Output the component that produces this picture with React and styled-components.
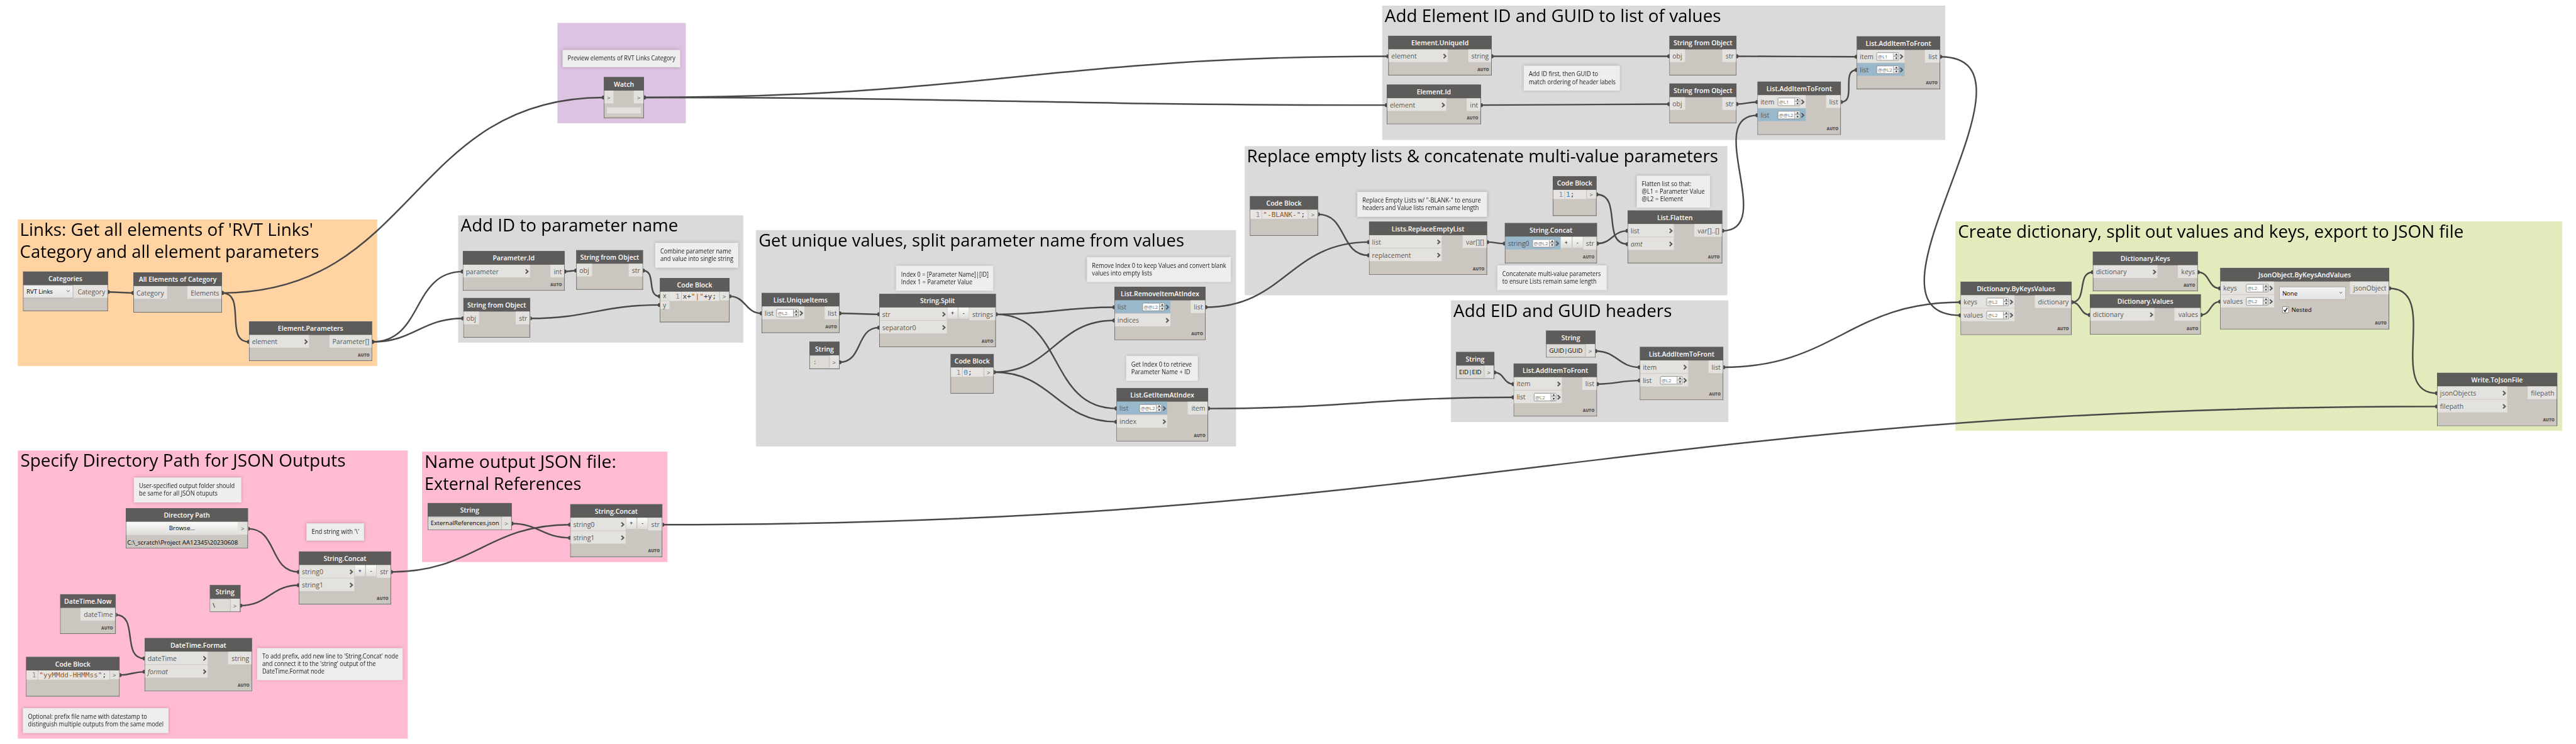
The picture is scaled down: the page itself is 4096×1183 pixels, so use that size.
import React, { useLayoutEffect, useRef, useState } from 'react';
import styled, { createGlobalStyle, css } from 'styled-components';

const SCALE = 4096 / 5060;

const GlobalStyle = createGlobalStyle`
  * { box-sizing: border-box; }
  body { margin: 0; background: #fff; overflow: hidden; }
`;

const Viewport = styled.main`
  width: 100vw;
  height: 100vh;
  overflow: hidden;
  background: #fff;
`;

const Canvas = styled.div`
  position: relative;
  width: 5060px;
  height: 1462px;
  transform: scale(${SCALE});
  transform-origin: 0 0;
  font-family: 'Open Sans', 'Noto Sans', sans-serif;
`;

const Placed = css`
  position: absolute;
  left: ${(p) => p.$x}px;
  top: ${(p) => p.$y}px;
  width: ${(p) => p.$w}px;
  height: ${(p) => p.$h}px;
`;

const Group = styled.section`
  ${Placed}
  padding: 0 0 0 ${(p) => p.$pad}px;
  background: ${(p) => p.$color};
`;

const GroupTitle = styled.h2`
  margin: -2.2px 0 0;
  font-size: 33px;
  line-height: 43.3px;
  font-weight: 400;
  color: #000;
`;

const NoteBox = styled.aside`
  ${Placed}
  display: flex;
  flex-direction: column;
  justify-content: center;
  padding: 0 0 0 10px;
  background: #eee;
  box-shadow: 0 0 6px rgba(60, 40, 60, 0.32);
  font-size: 12.3px;
  line-height: 14.3px;
  color: #1c1c1c;
`;

const Wires = styled.svg`
  position: absolute;
  inset: 0;
  pointer-events: none;
`;

const NodeBox = styled.article`
  ${Placed}
  display: flex;
  flex-direction: column;
  background: #cbc6bf;
  border: 1px solid #5e5c5a;
  border-top: 0;
  color: #595755;
  font-size: 13px;
`;

const NodeHeader = styled.header`
  flex: none;
  height: 27px;
  margin: 0 -1px;
  line-height: 28px;
  text-align: center;
  background: #5e5c5a;
  color: #fff;
  font-weight: 600;
  white-space: nowrap;
`;

const NodeBody = styled.div`
  display: flex;
  align-items: flex-start;
`;

const NodeFooter = styled.footer`
  margin-top: auto;
  padding: 0 4px 6px 0;
  text-align: right;
  font-size: 8px;
  line-height: 11px;
  font-weight: 800;
  color: #595755;
`;

const Inputs = styled.div`
  display: flex;
  flex-direction: column;
  gap: 1px;
  width: ${(p) => p.$w}px;
`;

const Port = styled.div`
  display: flex;
  align-items: center;
  height: ${(p) => p.$h || 25}px;
  padding: ${(p) => (p.$h ? '0 5px' : '1px 2px 0 5px')};
  background: ${(p) => (p.$blue ? '#99b8cb' : '#e4e2de')};
  font-style: ${(p) => (p.$italic ? 'italic' : 'normal')};
  white-space: nowrap;
`;

const PortLabel = styled.span`
  flex: 1;
`;

const Output = styled.div`
  display: flex;
  align-items: center;
  justify-content: flex-end;
  flex: none;
  width: ${(p) => p.$w}px;
  height: ${(p) => p.$h || 25}px;
  margin-left: ${(p) => (p.$left ? '0' : 'auto')};
  padding: 1px ${(p) => (p.$arrow ? 6 : 4.5)}px 0 0;
  background: #e4e2de;
  font-size: ${(p) => (p.$arrow ? 12 : 13)}px;
  border-left: ${(p) => (p.$line ? '1px solid #b9b7b4' : '0')};
`;

const SpinnerBox = styled.span`
  display: flex;
  width: 44px;
  height: 16px;
  margin: -1px 1px 0 0;
  background: #fff;
  border: 1px solid #7d7d7d;
  border-radius: 2px;
  font-size: 9.8px;
  line-height: 15px;
  color: #6d6d6d;
  overflow: hidden;
`;

const SpinnerText = styled.span`
  width: 32px;
  padding-left: 1.5px;
`;

const SpinnerButtons = styled.span`
  flex: 1;
  display: flex;
  flex-direction: column;
  border-left: 1px solid #7d7d7d;
`;

const SpinnerButton = styled.span`
  flex: 1;
  display: grid;
  place-items: center;
  background: linear-gradient(#fbfbfb, #c9c9c9);
  & + & { border-top: 1px solid #7d7d7d; }
  &::after {
    content: '';
    border: 2px solid transparent;
    border-top-width: 0;
    border-bottom: 3px solid #111;
    transform: ${(p) => (p.$down ? 'rotate(180deg)' : 'none')};
  }
`;

const ArityButtons = styled.div`
  flex: 1;
  display: flex;
  gap: 2px;
  padding: 0 1px;
`;

const ArityButton = styled.button`
  flex: 1;
  height: 22px;
  padding: 0 0 1px;
  border: 0;
  background: linear-gradient(#fbfbfa, #dedcd8);
  font: 12px 'Open Sans', sans-serif;
  color: #000;
`;

const Combo = styled.div`
  display: flex;
  align-items: center;
  justify-content: space-between;
  width: ${(p) => p.$w}px;
  height: 25.5px;
  padding: 0 5px 1px;
  background: linear-gradient(#f2f2f2, #e4e4e4);
  border: 1px solid #acacac;
  font-size: 12px;
  letter-spacing: -0.15px;
  color: #000;
`;

const Settings = styled.div`
  display: flex;
  flex-direction: column;
  gap: 12px;
  padding: 10px 0 0 10px;
`;

const CheckRow = styled.label`
  display: flex;
  align-items: center;
  gap: 5px;
  padding-left: 6px;
  font-size: 12px;
  line-height: 16px;
  color: #000;
`;

const CheckBox = styled.span`
  display: grid;
  place-items: center;
  width: 13px;
  height: 13px;
  background: #fff;
  border: 1px solid #707070;
`;

const TextField = styled.div`
  flex: 1;
  height: 25px;
  padding: 0 0 0 5px;
  background: #dedbd7;
  border-top: 1px solid #abadb3;
  border-right: 1px solid #abadb3;
  font-size: 12px;
  line-height: 24px;
  color: #000;
  white-space: pre;
`;

const Browse = styled.button`
  flex: 1;
  height: 26px;
  padding: 0 0 4px;
  border: 0;
  background: linear-gradient(#fbfbfa, #dedcd8);
  font: 12px 'Open Sans', sans-serif;
  color: #000;
`;

const PathText = styled.div`
  padding: 6px 0 0 2px;
  font-size: 12px;
  line-height: 17px;
  color: #000;
`;

const CodeLine = styled.code`
  display: flex;
  flex: 1;
  height: 18px;
  background: #e8e4e1;
  font: 13.7px/18.6px 'DejaVu Sans Mono', monospace;
  color: #333;
  white-space: pre;
`;

const LineNumber = styled.span`
  flex: none;
  width: ${(p) => (p.$wide ? 24 : 23)}px;
  margin-right: 2px;
  padding-right: 3px;
  text-align: right;
  color: #8e8e8e;
  border-right: 1px dotted #999;
`;

const Token = styled.span`
  color: ${(p) => ({ s: '#8f5a35', n: '#2f84d8', p: '#333' })[p.$t]};
`;

const WatchBox = styled.div`
  height: 12px;
  margin: 8px 5px 2px;
  background: #e2e0dc;
`;

const WatchStrip = styled.div`
  height: 2px;
  margin: 0 4px;
  background: #d2d2d2;
`;

const Line = styled.span`
  display: block;
  width: max-content;
  white-space: pre;
  transform-origin: 0 50%;
`;

/* One line of text, condensed or stretched to a given width. */
function FitLine({ width, children }) {
  const ref = useRef(null);
  const [ratio, setRatio] = useState(1);
  useLayoutEffect(() => {
    setRatio(width / ref.current.offsetWidth);
  }, [width, children]);
  return (
    <Line ref={ref} style={{ transform: `scaleX(${ratio})` }}>
      {children}
    </Line>
  );
}

const Chevron = () => (
  <svg width="8" height="11" viewBox="0 0 8 11">
    <path d="M1.6 1.2 L6 5.3 L1.6 9.4" fill="none" stroke="#595755" strokeWidth="2.5" />
  </svg>
);

const Caret = () => (
  <svg width="8" height="6" viewBox="0 0 8 6">
    <path d="M1.2 1 L4 4.4 L6.8 1" fill="none" stroke="#606060" strokeWidth="1.2" />
  </svg>
);

const Spinner = ({ value }) => (
  <SpinnerBox>
    <SpinnerText>{value}</SpinnerText>
    <SpinnerButtons>
      <SpinnerButton />
      <SpinnerButton $down />
    </SpinnerButtons>
  </SpinnerBox>
);

const GREY = '#dadada';
const PINK = '#ffbbd3';

const groups = [
  { x: 35, y: 431, w: 706, h: 288, c: '#ffd3a2', pad: 4, lines: [["Links: Get all elements of 'RVT Links'", 576], ['Category and all element parameters', 588]] },
  { x: 1095, y: 45, w: 252, h: 197, c: '#dcc3e1', pad: 4, lines: [] },
  { x: 2715, y: 11, w: 1106, h: 264, c: GREY, pad: 5, lines: [['Add Element ID and GUID to list of values', 661]] },
  { x: 2445, y: 287, w: 948, h: 293, c: GREY, pad: 4, lines: [['Replace empty lists & concatenate multi-value parameters', 926]] },
  { x: 1485, y: 452, w: 943, h: 425, c: GREY, pad: 5, lines: [['Get unique values, split parameter name from values', 836]] },
  { x: 900, y: 423, w: 560, h: 250, c: GREY, pad: 5, lines: [['Add ID to parameter name', 427]] },
  { x: 2850, y: 590, w: 545, h: 239, c: GREY, pad: 5, lines: [['Add EID and GUID headers', 429]] },
  { x: 3841, y: 435, w: 1192, h: 411, c: '#e1ebbb', pad: 5, lines: [['Create dictionary, split out values and keys, export to JSON file', 993]] },
  { x: 35, y: 885, w: 766, h: 566, c: PINK, pad: 5, lines: [['Specify Directory Path for JSON Outputs', 639]] },
  { x: 829, y: 887, w: 482, h: 217, c: PINK, pad: 5, lines: [['Name output JSON file:', 376], ['External References', 308]] },
];

const notes = [
  { x: 1105, y: 98, w: 231, h: 34, lines: [['Preview elements of RVT Links Category', 212]] },
  { x: 2993, y: 129, w: 189, h: 49, lines: [['Add ID first, then GUID to', 136], ['match ordering of header labels', 171]] },
  { x: 2666, y: 377, w: 255, h: 49, lines: [['Replace Empty Lists w/ "-BLANK-" to ensure', 233], ['headers and Value lists remain same length', 229]] },
  { x: 3215, y: 345, w: 144, h: 63, lines: [['Flatten list so that:', 97], ['@L1 = Parameter Value', 124], ['@L2 = Element', 81]] },
  { x: 2941, y: 521, w: 215, h: 49, lines: [['Concatenate multi-value parameters', 193], ['to ensure Lists remain same length', 185]] },
  { x: 1760, y: 522, w: 191, h: 49, lines: [['Index 0 = [Parameter Name]|[ID]', 172], ['Index 1 = Parameter Value', 140]] },
  { x: 2135, y: 505, w: 283, h: 49, lines: [['Remove Index 0 to keep Values and convert blank', 264], ['values into empty lists', 118]] },
  { x: 2212, y: 699, w: 141, h: 49, lines: [['Get Index 0 to retrieve', 119], ['Parameter Name + ID', 116]] },
  { x: 1287, y: 477, w: 163, h: 49, lines: [['Combine parameter name', 139], ['and value into single string', 143]] },
  { x: 263, y: 938, w: 211, h: 49, lines: [['User-specified output folder should', 188], ['be same for all JSON otuputs', 154]] },
  { x: 602, y: 1028, w: 113, h: 34, lines: [["End string with '\\'", 94]] },
  { x: 505, y: 1273, w: 286, h: 63, lines: [["To add prefix, add new line to 'String.Concat' node", 267], ["and connect it to the 'string' output of the", 223], ['DateTime.Format node', 122]] },
  { x: 45, y: 1391, w: 286, h: 49, lines: [['Optional: prefix file name with datestamp to', 234], ['distinguish multiple outputs from the same model', 266]] },
];

const nodes = {
  categories: { x: 45, y: 533, w: 167, h: 78, title: 'Categories', kind: 'combo', out: ['Category', 67] },
  allElements: { x: 262, y: 535, w: 174, h: 79, title: 'All Elements of Category', inW: 65, ins: [{ l: 'Category', plain: true }], out: ['Elements', 67] },
  elementParams: { x: 489, y: 631, w: 242, h: 78, title: 'Element.Parameters', inW: 117, ins: [{ l: 'element' }], out: ['Parameter[]', 83], auto: true },
  watch: { x: 1186, y: 151, w: 79, h: 81, title: 'Watch', kind: 'watch' },
  uniqueId: { x: 2727, y: 70, w: 203, h: 78, title: 'Element.UniqueId', inW: 116, ins: [{ l: 'element' }], out: ['string', 45], auto: true },
  elementId: { x: 2724, y: 166, w: 185, h: 78, title: 'Element.Id', inW: 116, ins: [{ l: 'element' }], out: ['int', 27], auto: true },
  sfoTop: { x: 3279, y: 70, w: 132, h: 78, title: 'String from Object', inW: 30, ins: [{ l: 'obj', plain: true }], out: ['str', 27] },
  sfoLow: { x: 3279, y: 164, w: 132, h: 78, title: 'String from Object', inW: 30, ins: [{ l: 'obj', plain: true }], out: ['str', 27] },
  frontA: { x: 3647, y: 71, w: 164, h: 104, title: 'List.AddItemToFront', inW: 93, ins: [{ l: 'item', lv: '@L1' }, { l: 'list', lv: '@@L2', blue: true }], out: ['list', 29], auto: true },
  frontB: { x: 3452, y: 160, w: 164, h: 105, title: 'List.AddItemToFront', inW: 94, ins: [{ l: 'item', lv: '@L1' }, { l: 'list', lv: '@@L2', blue: true }], out: ['list', 28], auto: true },
  blank: { x: 2455, y: 385, w: 134, h: 78, title: 'Code Block', kind: 'code', code: [['s', '"-BLANK-"'], ['p', ';']] },
  replaceEmpty: { x: 2689, y: 435, w: 232, h: 105, title: 'Lists.ReplaceEmptyList', inW: 142, ins: [{ l: 'list' }, { l: 'replacement' }], out: ['var[][]', 47], auto: true },
  concatList: { x: 2956, y: 438, w: 181, h: 79, title: 'String.Concat', inW: 108, ins: [{ l: 'string0', lv: '@@L2', blue: true }], arity: true, out: ['str', 26], auto: true },
  one: { x: 3050, y: 346, w: 86, h: 78, title: 'Code Block', kind: 'code', code: [['n', '1'], ['p', ';']] },
  flatten: { x: 3197, y: 413, w: 186, h: 104, title: 'List.Flatten', inW: 90, ins: [{ l: 'list' }, { l: 'amt', it: true }], out: ['var[]..[]', 54], auto: true },
  uniqueItems: { x: 1496, y: 575, w: 153, h: 79, title: 'List.UniqueItems', inW: 83, ins: [{ l: 'list', lv: '@L2' }], out: ['list', 28], auto: true },
  split: { x: 1727, y: 577, w: 229, h: 105, title: 'String.Split', inW: 132, ins: [{ l: 'str' }, { l: 'separator0' }], arity: true, out: ['strings', 51], auto: true },
  colon: { x: 1590, y: 671, w: 59, h: 54, title: 'String', kind: 'string', text: ' :' },
  zero: { x: 1867, y: 695, w: 85, h: 78, title: 'Code Block', kind: 'code', code: [['n', '0'], ['p', ';']] },
  removeItem: { x: 2189, y: 563, w: 179, h: 105, title: 'List.RemoveItemAtIndex', inW: 109, ins: [{ l: 'list', lv: '@@L2', blue: true }, { l: 'indices' }], out: ['list', 28], auto: true },
  getItem: { x: 2193, y: 762, w: 180, h: 105, title: 'List.GetItemAtIndex', inW: 99, ins: [{ l: 'list', lv: '@@L2', blue: true }, { l: 'index' }], out: ['item', 39], auto: true },
  paramId: { x: 909, y: 493, w: 200, h: 78, title: 'Parameter.Id', inW: 131, ins: [{ l: 'parameter' }], out: ['int', 27], auto: true },
  sfoName: { x: 1132, y: 491, w: 131, h: 78, title: 'String from Object', inW: 30, ins: [{ l: 'obj', plain: true }], out: ['str', 27] },
  sfoParam: { x: 910, y: 585, w: 131, h: 78, title: 'String from Object', inW: 30, ins: [{ l: 'obj', plain: true }], out: ['str', 27] },
  join: { x: 1296, y: 546, w: 137, h: 87, title: 'Code Block', kind: 'code', vars: ['x', 'y'], code: [['p', 'x+'], ['s', '"|"'], ['p', '+y;']] },
  eid: { x: 2860, y: 691, w: 75, h: 53, title: 'String', kind: 'string', text: 'EID|EID' },
  guid: { x: 3037, y: 649, w: 97, h: 53, title: 'String', kind: 'string', text: 'GUID|GUID' },
  headEid: { x: 2973, y: 714, w: 164, h: 104, title: 'List.AddItemToFront', inW: 94, ins: [{ l: 'item' }, { l: 'list', lv: '@L2' }], out: ['list', 28], auto: true },
  headGuid: { x: 3221, y: 681, w: 164, h: 105, title: 'List.AddItemToFront', inW: 94, ins: [{ l: 'item' }, { l: 'list', lv: '@L2' }], out: ['list', 28], auto: true },
  byKeys: { x: 3851, y: 553, w: 218, h: 105, title: 'Dictionary.ByKeysValues', inW: 105, ins: [{ l: 'keys', lv: '@L2' }, { l: 'values', lv: '@L2' }], out: ['dictionary', 71], auto: true },
  dictKeys: { x: 4111, y: 494, w: 206, h: 78, title: 'Dictionary.Keys', inW: 126, ins: [{ l: 'dictionary' }], out: ['keys', 38], auto: true },
  dictValues: { x: 4105, y: 578, w: 218, h: 79, title: 'Dictionary.Values', inW: 126, ins: [{ l: 'dictionary' }], out: ['values', 51], auto: true },
  json: { x: 4361, y: 526, w: 332, h: 121, title: 'JsonObject.ByKeysAndValues', inW: 105, ins: [{ l: 'keys', lv: '@L2' }, { l: 'values', lv: '@L2' }], settings: true, out: ['jsonObject', 76], auto: true },
  write: { x: 4787, y: 732, w: 236, h: 105, title: 'Write.ToJsonFile', inW: 137, ins: [{ l: 'jsonObjects' }, { l: 'filepath' }], out: ['filepath', 57], auto: true },
  dirPath: { x: 247, y: 998, w: 240, h: 79, title: 'Directory Path', kind: 'path', text: 'C:\\_scratch\\Project AA12345\\20230608' },
  concatDir: { x: 587, y: 1083, w: 181, h: 104, title: 'String.Concat', inW: 108, ins: [{ l: 'string0' }, { l: 'string1' }], arity: true, out: ['str', 27], auto: true },
  slash: { x: 412, y: 1149, w: 60, h: 53, title: 'String', kind: 'string', text: '\\' },
  now: { x: 118, y: 1167, w: 109, h: 78, title: 'DateTime.Now', inW: 0, ins: [], out: ['dateTime', 68], auto: true },
  stamp: { x: 51, y: 1290, w: 184, h: 78, title: 'Code Block', kind: 'code', code: [['s', '"yyMMdd-HHMMss"'], ['p', ';']] },
  format: { x: 284, y: 1253, w: 211, h: 105, title: 'DateTime.Format', inW: 123, ins: [{ l: 'dateTime' }, { l: 'format', it: true }], out: ['string', 46], auto: true },
  fileName: { x: 840, y: 988, w: 165, h: 53, title: 'String', kind: 'string', text: 'ExternalReferences.json', fit: 135 },
  concatName: { x: 1120, y: 990, w: 181, h: 104, title: 'String.Concat', inW: 108, ins: [{ l: 'string0' }, { l: 'string1' }], arity: true, out: ['str', 27], auto: true },
};

const wires = [
  ['categories', 'allElements', 0], ['allElements', 'watch', 0], ['allElements', 'elementParams', 0],
  ['watch', 'uniqueId', 0], ['watch', 'elementId', 0],
  ['elementParams', 'paramId', 0], ['elementParams', 'sfoParam', 0],
  ['paramId', 'sfoName', 0], ['sfoName', 'join', 0], ['sfoParam', 'join', 1], ['join', 'uniqueItems', 0],
  ['uniqueItems', 'split', 0], ['colon', 'split', 1],
  ['split', 'removeItem', 0], ['split', 'getItem', 0], ['zero', 'removeItem', 1], ['zero', 'getItem', 1],
  ['removeItem', 'replaceEmpty', 0], ['blank', 'replaceEmpty', 1], ['replaceEmpty', 'concatList', 0],
  ['concatList', 'flatten', 0], ['one', 'flatten', 1], ['flatten', 'frontB', 1],
  ['uniqueId', 'sfoTop', 0], ['elementId', 'sfoLow', 0], ['sfoTop', 'frontA', 0], ['sfoLow', 'frontB', 0],
  ['frontB', 'frontA', 1], ['frontA', 'byKeys', 1],
  ['getItem', 'headEid', 1], ['eid', 'headEid', 0], ['guid', 'headGuid', 0], ['headEid', 'headGuid', 1],
  ['headGuid', 'byKeys', 0], ['byKeys', 'dictKeys', 0], ['byKeys', 'dictValues', 0],
  ['dictKeys', 'json', 0], ['dictValues', 'json', 1], ['json', 'write', 0],
  ['dirPath', 'concatDir', 0], ['slash', 'concatDir', 1], ['now', 'format', 0], ['stamp', 'format', 1],
  ['concatDir', 'concatName', 0], ['fileName', 'concatName', 1], ['concatName', 'write', 1],
];

const outPoint = (n) => [n.x + n.w, n.y + (n.kind === 'code' ? 36 : 40.5)];
const inPoint = (n, i) => [n.x, n.y + (n.kind === 'code' ? 36 + 17 * i : 40.5 + 26 * i)];

function Wire({ from, to, port }) {
  const [x0, y0] = outPoint(nodes[from]);
  const [x1, y1] = inPoint(nodes[to], port);
  const bend = 0.45 * Math.hypot(x1 - x0, y1 - y0);
  return (
    <g>
      <path
        d={`M${x0} ${y0} C${x0 + bend} ${y0} ${x1 - bend} ${y1} ${x1} ${y1}`}
        fill="none"
        stroke="#484848"
        strokeWidth="3"
      />
      <circle cx={x0} cy={y0} r="4" fill="#484848" />
      <circle cx={x1} cy={y1} r="4" fill="#484848" />
    </g>
  );
}

function InputPort({ port }) {
  return (
    <Port $blue={port.blue} $italic={port.it}>
      <PortLabel>{port.l}</PortLabel>
      {port.lv && <Spinner value={port.lv} />}
      {!port.plain && <Chevron />}
    </Port>
  );
}

function NodeContent({ node }) {
  switch (node.kind) {
    case 'combo':
      return (
        <NodeBody>
          <Combo $w={98}>RVT Links<Caret /></Combo>
          <Output $w={node.out[1]}>{node.out[0]}</Output>
        </NodeBody>
      );
    case 'watch':
      return (
        <>
          <NodeBody>
            <Output $w={18} $arrow $left>&gt;</Output>
            <Output $w={19} $arrow>&gt;</Output>
          </NodeBody>
          <WatchBox />
          <WatchStrip />
        </>
      );
    case 'code':
      return (
        <NodeBody>
          {node.vars && (
            <Inputs $w={18}>
              {node.vars.map((v) => <Port key={v} $h={16.5}>{v}</Port>)}
            </Inputs>
          )}
          <CodeLine>
            <LineNumber $wide={Boolean(node.vars)}>1</LineNumber>
            <span>{node.code.map(([t, s]) => <Token key={s} $t={t}>{s}</Token>)}</span>
          </CodeLine>
          <Output $w={19} $h={17} $arrow $line>&gt;</Output>
        </NodeBody>
      );
    case 'string':
      return (
        <NodeBody>
          <TextField>{node.fit ? <FitLine width={node.fit}>{node.text}</FitLine> : node.text}</TextField>
          <Output $w={18} $arrow>&gt;</Output>
        </NodeBody>
      );
    case 'path':
      return (
        <>
          <NodeBody>
            <Browse>Browse...</Browse>
            <Output $w={19} $arrow>&gt;</Output>
          </NodeBody>
          <PathText><FitLine width={217}>{node.text}</FitLine></PathText>
        </>
      );
    default:
      return (
        <NodeBody>
          <Inputs $w={node.inW}>
            {node.ins.map((p) => <InputPort key={p.l} port={p} />)}
          </Inputs>
          {node.arity && (
            <ArityButtons>
              <ArityButton>+</ArityButton>
              <ArityButton>-</ArityButton>
            </ArityButtons>
          )}
          {node.settings && (
            <Settings>
              <Combo $w={131}>None<Caret /></Combo>
              <CheckRow>
                <CheckBox>
                  <svg width="11" height="11" viewBox="0 0 11 11">
                    <path d="M2 5.5 L4.4 9 L9 1.4" fill="none" stroke="#111" strokeWidth="1.8" />
                  </svg>
                </CheckBox>
                Nested
              </CheckRow>
            </Settings>
          )}
          <Output $w={node.out[1]}>{node.out[0]}</Output>
        </NodeBody>
      );
  }
}

export default function App() {
  return (
    <Viewport>
      <GlobalStyle />
      <Canvas>
        {groups.map((g) => (
          <Group key={`${g.x}-${g.y}`} $x={g.x} $y={g.y} $w={g.w} $h={g.h} $color={g.c} $pad={g.pad}>
            <GroupTitle>
              {g.lines.map(([text, width]) => <FitLine key={text} width={width}>{text}</FitLine>)}
            </GroupTitle>
          </Group>
        ))}
        {notes.map((n) => (
          <NoteBox key={`${n.x}-${n.y}`} $x={n.x} $y={n.y} $w={n.w} $h={n.h}>
            {n.lines.map(([text, width]) => <FitLine key={text} width={width}>{text}</FitLine>)}
          </NoteBox>
        ))}
        <Wires width="5060" height="1462">
          {wires.map(([from, to, port]) => (
            <Wire key={`${from}-${to}`} from={from} to={to} port={port} />
          ))}
        </Wires>
        {Object.entries(nodes).map(([id, n]) => (
          <NodeBox key={id} $x={n.x} $y={n.y} $w={n.w} $h={n.h}>
            <NodeHeader>{n.title}</NodeHeader>
            <NodeContent node={n} />
            {n.auto && <NodeFooter>AUTO</NodeFooter>}
          </NodeBox>
        ))}
      </Canvas>
    </Viewport>
  );
}
